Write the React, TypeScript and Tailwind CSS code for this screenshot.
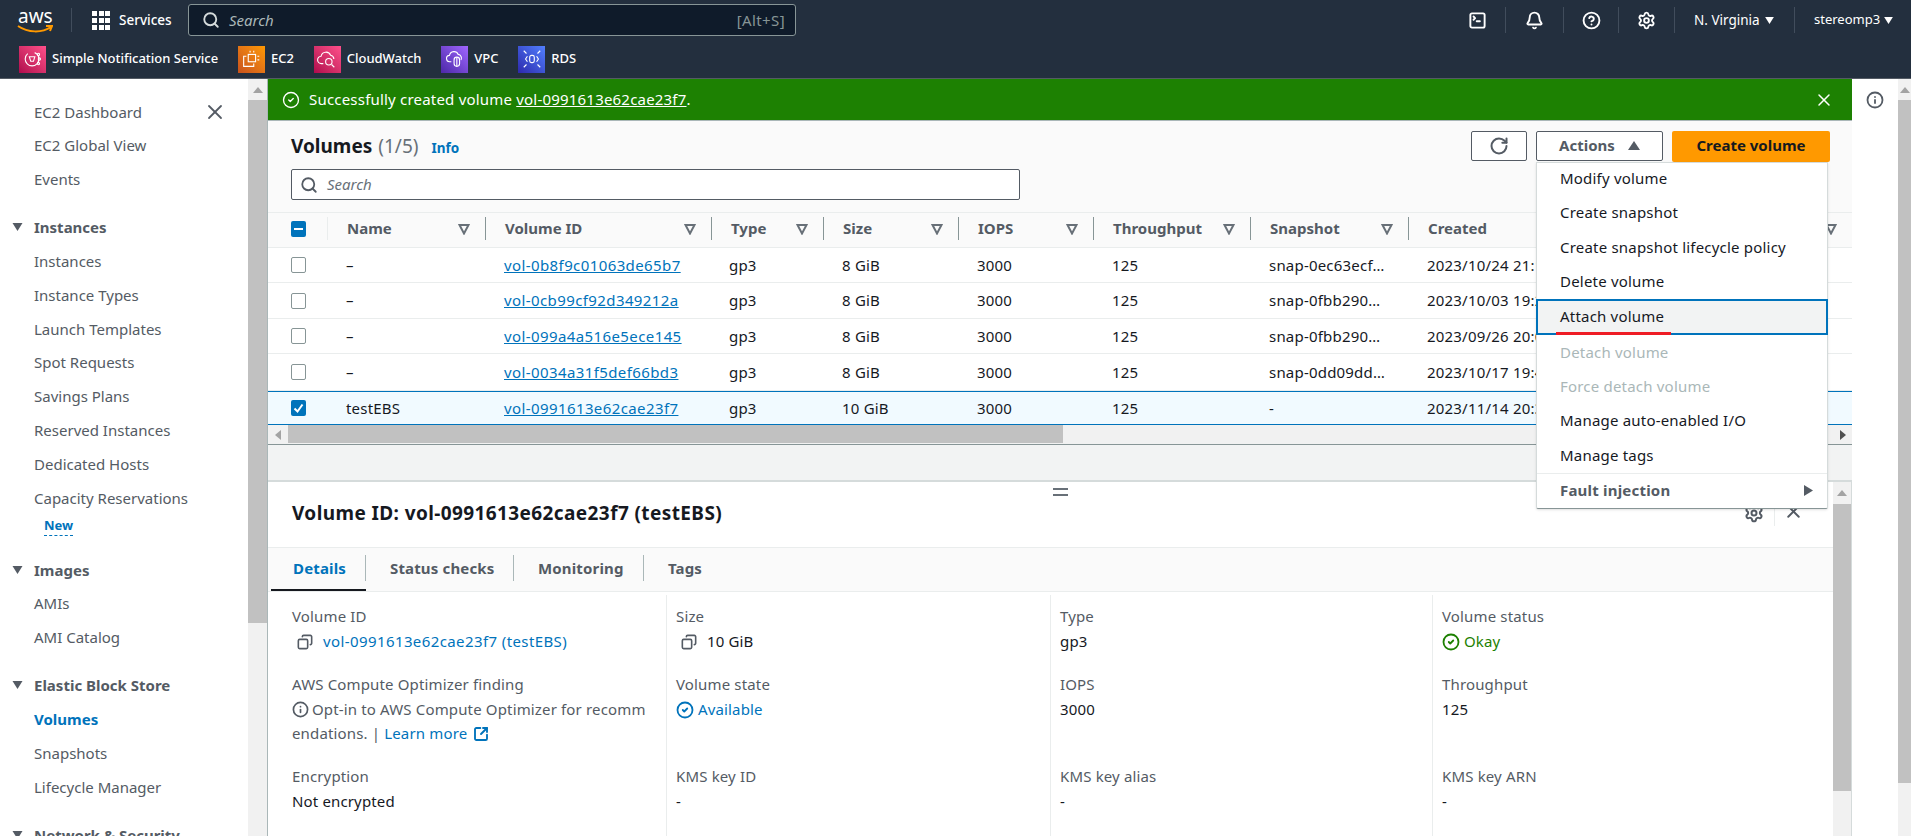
import { Bell, CircleCheck, CircleHelp, Copy, Info, RotateCw, Search, Settings, SquareArrowOutUpRight, SquareTerminal, X } from "lucide-react";
import type { ReactNode } from "react";

const COLS = "grid grid-cols-[59px_158px_226px_112px_135px_135px_157px_158px_1fr]";

const rows = [
  { h: "h-[35px]", name: "–", id: "vol-0b8f9c01063de65b7", size: "8 GiB", snap: "snap-0ec63ecf…", date: "2023/10/24 21:14 GMT+8" },
  { h: "h-[36px]", name: "–", id: "vol-0cb99cf92d349212a", size: "8 GiB", snap: "snap-0fbb290…", date: "2023/10/03 19:22 GMT+8" },
  { h: "h-[35px]", name: "–", id: "vol-099a4a516e5ece145", size: "8 GiB", snap: "snap-0fbb290…", date: "2023/09/26 20:05 GMT+8" },
  { h: "h-[37px]", name: "–", id: "vol-0034a31f5def66bd3", size: "8 GiB", snap: "snap-0dd09dd…", date: "2023/10/17 19:41 GMT+8" },
  { h: "h-[34px]", name: "testEBS", id: "vol-0991613e62cae23f7", size: "10 GiB", snap: "-", date: "2023/11/14 20:30 GMT+8", selected: true },
];

const headers = ["Name", "Volume ID", "Type", "Size", "IOPS", "Throughput", "Snapshot", "Created"];

function Tri({ className = "" }: { className?: string }) {
  return (
    <svg viewBox="0 0 10 8" className={className} fill="currentColor">
      <path d="M0 0h10L5 8z" />
    </svg>
  );
}

function SortIcon() {
  return (
    <svg viewBox="0 0 12 12" className="w-[12px] h-[12px] text-[#687078]" fill="none" stroke="currentColor" strokeWidth="2">
      <path d="M1.5 2h9L6 10.5z" />
    </svg>
  );
}

function NavGroup({ title, items }: { title?: string; items: ReactNode[] }) {
  return (
    <div className="mb-[14px]">
      {title && (
        <div className="h-[34px] flex items-center text-[#545b64] font-bold">
          <Tri className="w-[11px] h-[8px] ml-[12px] mr-[11px] text-[#545b64]" />
          {title}
        </div>
      )}
      {items.map((it, i) => (
        <div key={i} className="h-[33.8px] flex items-center pl-[34px] text-[#545b64]">{it}</div>
      ))}
    </div>
  );
}

function Sidebar() {
  return (
    <div className="w-[248px] bg-white relative pt-[16px] shrink-0 overflow-hidden">
      <X className="absolute left-[203px] top-[21px] w-[24px] h-[24px] text-[#545b64]" strokeWidth={1.8} />
      <NavGroup items={["EC2 Dashboard", "EC2 Global View", "Events"]} />
      <NavGroup title="Instances" items={["Instances", "Instance Types", "Launch Templates", "Spot Requests", "Savings Plans", "Reserved Instances", "Dedicated Hosts", "Capacity Reservations"]} />
      <div className="-mt-[16px] mb-[12px] pl-[44px] h-[28px]">
        <span className="text-[13px] font-bold text-[#0073bb] border-b border-dashed border-[#0073bb] leading-[19px] inline-block">New</span>
      </div>
      <NavGroup title="Images" items={["AMIs", "AMI Catalog"]} />
      <NavGroup title="Elastic Block Store" items={[<span className="font-bold text-[#0073bb]">Volumes</span>, "Snapshots", "Lifecycle Manager"]} />
      <NavGroup title="Network & Security" items={[]} />
    </div>
  );
}

function VScroll({ top, thumb, className = "" }: { top: string; thumb: string; className?: string }) {
  return (
    <div className={`bg-[#f1f1f1] flex flex-col items-center shrink-0 ${className}`}>
      <div className={`${top} flex items-center justify-center w-full`}>
        <svg viewBox="0 0 10 6" className="w-[10px] h-[6px] text-[#a3a3a3]" fill="currentColor"><path d="M5 0l5 6H0z" /></svg>
      </div>
      <div className={`${thumb} w-full bg-[#c1c1c1]`} />
    </div>
  );
}

function Checkbox({ state }: { state?: "mixed" | "on" }) {
  if (state)
    return (
      <div className="w-[15px] h-[16px] rounded-[2px] bg-[#0073bb] flex items-center justify-center">
        <svg viewBox="0 0 15 16" className="w-[15px] h-[16px]" fill="none" stroke="white" strokeWidth="2">
          {state === "mixed" ? <path d="M3 8h9" /> : <path d="M3.5 8.5l3 3 5-7" />}
        </svg>
      </div>
    );
  return <div className="w-[15px] h-[16px] rounded-[2px] border border-[#879596] bg-white" />;
}

function VolumesTable() {
  return (
    <div className="bg-[#fafafa]">
      <div className="h-[92px] px-[23px] pt-[12px]">
        <div className="flex items-baseline h-[32px]">
          <span className="text-[19px] font-bold text-[#16191f]">Volumes</span>
          <span className="text-[19px] text-[#687078] ml-[6px]">(1/5)</span>
          <span className="text-[13.5px] font-bold text-[#0073bb] ml-[13px]">Info</span>
        </div>
        <div className="w-[729px] h-[31px] mt-[5px] border border-[#545b64] rounded-[2px] bg-white flex items-center pl-[8px]">
          <Search className="w-[18px] h-[18px] text-[#545b64]" strokeWidth={2.4} />
          <span className="italic text-[#687078] ml-[9px]">Search</span>
        </div>
      </div>
      <div className={`${COLS} h-[36px] pb-[3px] border-y border-[#eaeded] items-center font-bold text-[#545b64]`}>
        <div className="pl-[23px] flex items-center h-[23px]"><Checkbox state="mixed" /></div>
        {headers.map((h, i) => (
          <div key={h} className={`flex items-center justify-between h-[23px] pl-[19px] pr-[15px] ${i === 0 ? "border-l border-[#eaeded]" : "border-l border-[#879596]"}`}>
            <span>{h}</span>
            <SortIcon />
          </div>
        ))}
      </div>
      <div className="bg-white tracking-[0.2px]">
        {rows.map((r) => (
          <div key={r.id} className={`${COLS} ${r.h} items-center text-[#16191f] border-b ${r.selected ? "bg-[#f1faff] border-y border-[#0073bb]" : "border-[#eaeded]"}`}>
            <div className="pl-[23px] flex items-center"><Checkbox state={r.selected ? "on" : undefined} /></div>
            <div className="pl-[19px]">{r.name}</div>
            <div className="pl-[19px] text-[#0073bb] underline tracking-[0.4px]">{r.id}</div>
            <div className="pl-[18px]">gp3</div>
            <div className="pl-[19px]">{r.size}</div>
            <div className="pl-[19px]">3000</div>
            <div className="pl-[19px]">125</div>
            <div className="pl-[19px]">{r.snap}</div>
            <div className="pl-[19px]">{r.date}</div>
          </div>
        ))}
      </div>
      <div className="h-[20px] bg-[#f1f1f1] border-b border-[#879596] flex">
        <div className="w-[20px] flex items-center justify-center">
          <svg viewBox="0 0 6 10" className="w-[6px] h-[10px] text-[#a3a3a3]" fill="currentColor"><path d="M0 5l6-5v10z" /></svg>
        </div>
        <div className="w-[775px] h-[18px] bg-[#c1c1c1]" />
        <div className="flex-1" />
        <div className="w-[18px] flex items-center justify-center">
          <svg viewBox="0 0 6 10" className="w-[6px] h-[10px] text-[#505050]" fill="currentColor"><path d="M6 5L0 0v10z" /></svg>
        </div>
      </div>
      <div className="h-[37px] bg-[#f2f3f3] border-b-2 border-[#d5dbdb]" />
    </div>
  );
}

function Field({ label, h, children }: { label: string; h: string; children: ReactNode }) {
  return (
    <div className={h}>
      <div className="h-[25px] leading-[25px] text-[#545b64]">{label}</div>
      <div className="leading-[25px] text-[#16191f]">{children}</div>
    </div>
  );
}

function Details() {
  return (
    <div className="flex flex-1 min-h-0 bg-white">
      <div className="flex-1 min-w-0 relative tracking-[0.15px]">
        <div className="absolute left-[785px] top-[6px] w-[15px] h-[8px] border-y-2 border-[#687078]" />
        <div className="h-[65px] flex items-center pl-[24px] pb-[2px] relative">
          <span className="text-[19px] font-bold text-[#16191f] tracking-[0.4px]">Volume ID: vol-0991613e62cae23f7 (testEBS)</span>
          <Settings className="absolute left-[1476px] top-[21px] w-[20px] h-[20px] text-[#545b64]" strokeWidth={2.4} />
          <div className="absolute left-[1506px] top-[27px] h-[17px] w-[1px] bg-[#eaeded]" />
          <X className="absolute left-[1515px] top-[19px] w-[21px] h-[21px] text-[#545b64]" strokeWidth={2.2} />
        </div>
        <div className="h-[45px] bg-[#fafafa] border-y border-[#eaeded] flex items-center pb-[3px] font-bold text-[#545b64] relative">
          <div className="w-[98px] h-[26px] flex items-center pl-[25px] text-[#0073bb] border-r border-[#aab7b8]">Details</div>
          <div className="w-[148px] h-[26px] flex items-center pl-[24px] border-r border-[#aab7b8]">Status checks</div>
          <div className="w-[130px] h-[26px] flex items-center pl-[24px] border-r border-[#aab7b8]">Monitoring</div>
          <div className="h-[26px] flex items-center pl-[24px]">Tags</div>
          <div className="absolute left-[3px] bottom-0 w-[95px] h-[2px] bg-[#16191f]" />
        </div>
        <div className="grid grid-cols-[398px_384px_382px_1fr] pt-[3px] h-full">
          <div className="pl-[24px] pt-[9px]">
            <Field label="Volume ID" h="h-[68px]">
              <span className="flex items-center pl-[5px] text-[#0073bb] tracking-[0.4px]">
                <Copy className="w-[16px] h-[16px] text-[#545b64] mr-[10px] -scale-x-100" strokeWidth={2.4} />
                vol-0991613e62cae23f7 (testEBS)
              </span>
            </Field>
            <Field label="AWS Compute Optimizer finding" h="h-[92px]">
              <div className="text-[#545b64] leading-[24px]">
                <Info className="inline w-[17px] h-[17px] mr-[3px] -mt-[2px]" strokeWidth={2.4} />Opt-in to AWS Compute Optimizer for recomm<br />endations. | <span className="text-[#0073bb]">Learn more</span>
                <SquareArrowOutUpRight className="inline w-[16px] h-[16px] ml-[6px] text-[#0073bb] -mt-[2px]" strokeWidth={2.8} />
              </div>
            </Field>
            <Field label="Encryption" h="h-[50px]">Not encrypted</Field>
          </div>
          <div className="pl-[9px] pt-[9px] border-l border-[#eaeded]">
            <Field label="Size" h="h-[68px]">
              <span className="flex items-center pl-[5px]">
                <Copy className="w-[16px] h-[16px] text-[#545b64] mr-[10px] -scale-x-100" strokeWidth={2.4} />10 GiB
              </span>
            </Field>
            <Field label="Volume state" h="h-[92px]">
              <span className="flex items-center text-[#0073bb]"><CircleCheck className="w-[18px] h-[18px] mr-[4px]" strokeWidth={2.4} />Available</span>
            </Field>
            <Field label="KMS key ID" h="h-[50px]">-</Field>
          </div>
          <div className="pl-[9px] pt-[9px] border-l border-[#eaeded]">
            <Field label="Type" h="h-[68px]">gp3</Field>
            <Field label="IOPS" h="h-[92px]">3000</Field>
            <Field label="KMS key alias" h="h-[50px]">-</Field>
          </div>
          <div className="pl-[9px] pt-[9px] border-l border-[#eaeded]">
            <Field label="Volume status" h="h-[68px]">
              <span className="flex items-center text-[#1d8102]"><CircleCheck className="w-[18px] h-[18px] mr-[4px]" strokeWidth={2.4} />Okay</span>
            </Field>
            <Field label="Throughput" h="h-[92px]">125</Field>
            <Field label="KMS key ARN" h="h-[50px]">-</Field>
          </div>
        </div>
      </div>
      <VScroll top="h-[22px]" thumb="h-[287px]" className="w-[19px] border-r border-[#d5dbdb]" />
    </div>
  );
}

function ActionsMenu() {
  const item = "h-[34.4px] flex items-center pl-[23px]";
  return (
    <div className="absolute left-[1268px] top-[83px] w-[292px] h-[347px] bg-white border border-[#d5dbdb] border-b-[#879596] rounded-b-[2px] shadow-sm text-[#16191f] tracking-[0.2px]">
      <div className={`${item} -mt-[2px]`}>Modify volume</div>
      <div className={item}>Create snapshot</div>
      <div className={item}>Create snapshot lifecycle policy</div>
      <div className={item}>Delete volume</div>
      <div className="h-[36px] flex items-center pl-[22px] bg-[#f2f3f3] border-2 border-[#0073bb] relative -mx-[1px]">
        Attach volume
        <div className="absolute left-[18px] -bottom-[2px] w-[115px] h-[3px] bg-[#ee1c25]" />
      </div>
      <div className={`${item} text-[#aab7b8]`}>Detach volume</div>
      <div className={`${item} text-[#aab7b8]`}>Force detach volume</div>
      <div className={item}>Manage auto-enabled I/O</div>
      <div className={item}>Manage tags</div>
      <div className="h-[34px] mt-[1px] border-t border-[#eaeded] flex items-center justify-between pl-[23px] pr-[14px] font-bold text-[#545b64]">
        Fault injection
        <svg viewBox="0 0 9 11" className="w-[9px] h-[11px]" fill="currentColor"><path d="M0 0l9 5.5L0 11z" /></svg>
      </div>
    </div>
  );
}

function Main() {
  return (
    <div className="w-[1585px] shrink-0 relative flex flex-col border-l border-[#aab7b8]">
      <div className="h-[41px] bg-[#1d8102] shadow-[0_1px_0_#aab7b8] relative z-10 flex items-center pl-[14px] pr-[18px] text-white shrink-0 tracking-[0.2px]">
        <CircleCheck className="w-[18px] h-[18px] mr-[9px]" strokeWidth={1.8} />
        <span>Successfully created volume <span className="underline">vol-0991613e62cae23f7</span>.</span>
        <X className="ml-auto w-[20px] h-[20px]" strokeWidth={1.8} />
      </div>
      <div className="absolute left-[1203px] top-[52px] w-[56px] h-[30px] border border-[#545b64] rounded-[2px] bg-white flex items-center justify-center">
        <RotateCw className="w-[20px] h-[20px] text-[#545b64]" strokeWidth={2.4} />
      </div>
      <div className="absolute left-[1268px] top-[52px] w-[127px] h-[30px] pb-[2px] border border-[#545b64] rounded-[2px] bg-white flex items-center justify-center font-bold text-[#545b64]">
        Actions
        <svg viewBox="0 0 12 9" className="w-[12px] h-[9px] ml-[13px]" fill="currentColor"><path d="M6 0l6 9H0z" /></svg>
      </div>
      <div className="absolute left-[1404px] top-[52px] w-[158px] h-[31px] pb-[2px] rounded-[2px] bg-[#ff9900] flex items-center justify-center font-bold text-[#16191f]">
        Create volume
      </div>
      <VolumesTable />
      <Details />
      <ActionsMenu />
    </div>
  );
}

function ServiceLink({ label, bg, children }: { label: string; bg: string; children: ReactNode }) {
  return (
    <div className="flex items-center text-white font-medium text-[13px]">
      <div className={`w-[27px] h-[27px] ${bg} flex items-center justify-center mr-[6px]`}>
        <svg viewBox="0 0 24 24" className="w-[22px] h-[22px]" fill="none" stroke="white" strokeWidth="1.2">{children}</svg>
      </div>
      {label}
    </div>
  );
}

function TopNav() {
  return (
    <div className="bg-[#232f3e] shrink-0 border-b border-[#545b64] h-[79px]">
      <div className="h-[40px] flex items-center text-white relative">
        <div className="w-[72px] h-[24px] border-r border-[#414d5c] relative">
          <span className="absolute left-[18px] -top-[4px] text-[19px] leading-[24px] text-white">aws</span>
          <svg viewBox="0 0 36 10" className="absolute left-[17px] top-[17px] w-[36px] h-[10px]" fill="none" stroke="#ff9900" strokeWidth="2"><path d="M1 1c10 7 24 7 33 1M29 1l6 0-2 5" /></svg>
        </div>
        <div className="ml-[20px] grid grid-cols-3 gap-[2px] w-[18px]">
          {Array.from({ length: 9 }).map((_, i) => <span key={i} className="w-[5px] h-[5px] bg-white" />)}
        </div>
        <span className="ml-[9px] w-[69px] font-medium text-[13.5px]">Services</span>
        <div className="w-[608px] h-[32px] bg-[#0f1b2a] border border-[#879596] rounded-[3px] flex items-center pl-[13px] pr-[10px] text-[#aab7b8]">
          <Search className="w-[18px] h-[18px] text-[#d5dbdb]" strokeWidth={2.5} />
          <span className="italic ml-[9px]">Search</span>
          <span className="ml-auto text-[#879596] tracking-[0.4px]">[Alt+S]</span>
        </div>
        <div className="ml-auto flex items-center pr-[18px] h-[26px] text-[13.5px]">
          <SquareTerminal className="w-[19px] h-[19px] mx-[18px]" strokeWidth={2.4} />
          <div className="w-[1px] h-[26px] bg-[#414d5c]" />
          <Bell className="w-[19px] h-[19px] mx-[19px]" strokeWidth={2.4} />
          <div className="w-[1px] h-[26px] bg-[#414d5c]" />
          <CircleHelp className="w-[19px] h-[19px] mx-[17.5px]" strokeWidth={2.4} />
          <div className="w-[1px] h-[26px] bg-[#414d5c]" />
          <Settings className="w-[19px] h-[19px] mx-[18px]" strokeWidth={2.4} />
          <div className="w-[1px] h-[26px] bg-[#414d5c]" />
          <span className="ml-[19px] w-[64px] whitespace-nowrap">N. Virginia</span>
          <Tri className="w-[9px] h-[7px] ml-[7px] mr-[20px]" />
          <div className="w-[1px] h-[26px] bg-[#414d5c]" />
          <span className="ml-[19px] w-[67px] whitespace-nowrap text-[13px]">stereomp3</span>
          <Tri className="w-[9px] h-[7px] ml-[3px]" />
        </div>
      </div>
      <div className="h-[38px] flex items-center pl-[19px] gap-[19.8px]">
        <ServiceLink label="Simple Notification Service" bg="bg-linear-to-tr from-[#b0084d] to-[#ff4f8b]">
          <circle cx="11" cy="12" r="7.5" strokeDasharray="30 8" />
          <path d="M8 9.5h6l-1.5 5h-3zM18 7.5v9" />
          <circle cx="18" cy="7" r="1.2" /><circle cx="19" cy="12" r="1.2" /><circle cx="18" cy="17" r="1.2" />
        </ServiceLink>
        <ServiceLink label="EC2" bg="bg-linear-to-tr from-[#c8511b] to-[#ff9900]">
          <rect x="9" y="7" width="8" height="8" />
          <path d="M7 9H4v11h11v-3M11 5V3M15 5V3M19 9h2M19 13h2" />
        </ServiceLink>
        <ServiceLink label="CloudWatch" bg="bg-linear-to-tr from-[#b0084d] to-[#ff4f8b]">
          <path d="M8 17H6a4 4 0 01-.5-8 5.5 5.5 0 0110.5-1 4.5 4.5 0 013.5 4" />
          <circle cx="14" cy="15" r="3.5" /><path d="M17 18l3 3" />
        </ServiceLink>
        <ServiceLink label="VPC" bg="bg-linear-to-tr from-[#4d27a8] to-[#a166ff]">
          <path d="M8 15H6.5a3.5 3.5 0 01-.5-7 5 5 0 019.5-1 4 4 0 013 6" />
          <rect x="11" y="10" width="6" height="10" rx="3" /><path d="M14 10v10" />
        </ServiceLink>
        <ServiceLink label="RDS" bg="bg-linear-to-tr from-[#2e27ad] to-[#527fff]">
          <rect x="9.5" y="8" width="5" height="8" rx="2" />
          <path d="M3 3l3 3M21 3l-3 3M3 21l3-3M21 21l-3-3M7 9l-2 3 2 3M17 9l2 3-2 3" />
        </ServiceLink>
      </div>
    </div>
  );
}

export default function App() {
  return (
    <div className="w-[1911px] h-[836px] overflow-hidden flex flex-col font-['Noto_Sans','Open_Sans',sans-serif] text-[15px]">
      <TopNav />
      <div className="flex flex-1 min-h-0 bg-white">
        <Sidebar />
        <VScroll top="h-[21px]" thumb="h-[523px]" className="w-[19px]" />
        <Main />
        <div className="w-[46px] shrink-0 bg-white flex justify-center pt-[12px]">
          <Info className="w-[18px] h-[18px] text-[#545b64]" strokeWidth={2.4} />
        </div>
        <VScroll top="h-[21px]" thumb="h-[683px]" className="flex-1" />
      </div>
    </div>
  );
}
